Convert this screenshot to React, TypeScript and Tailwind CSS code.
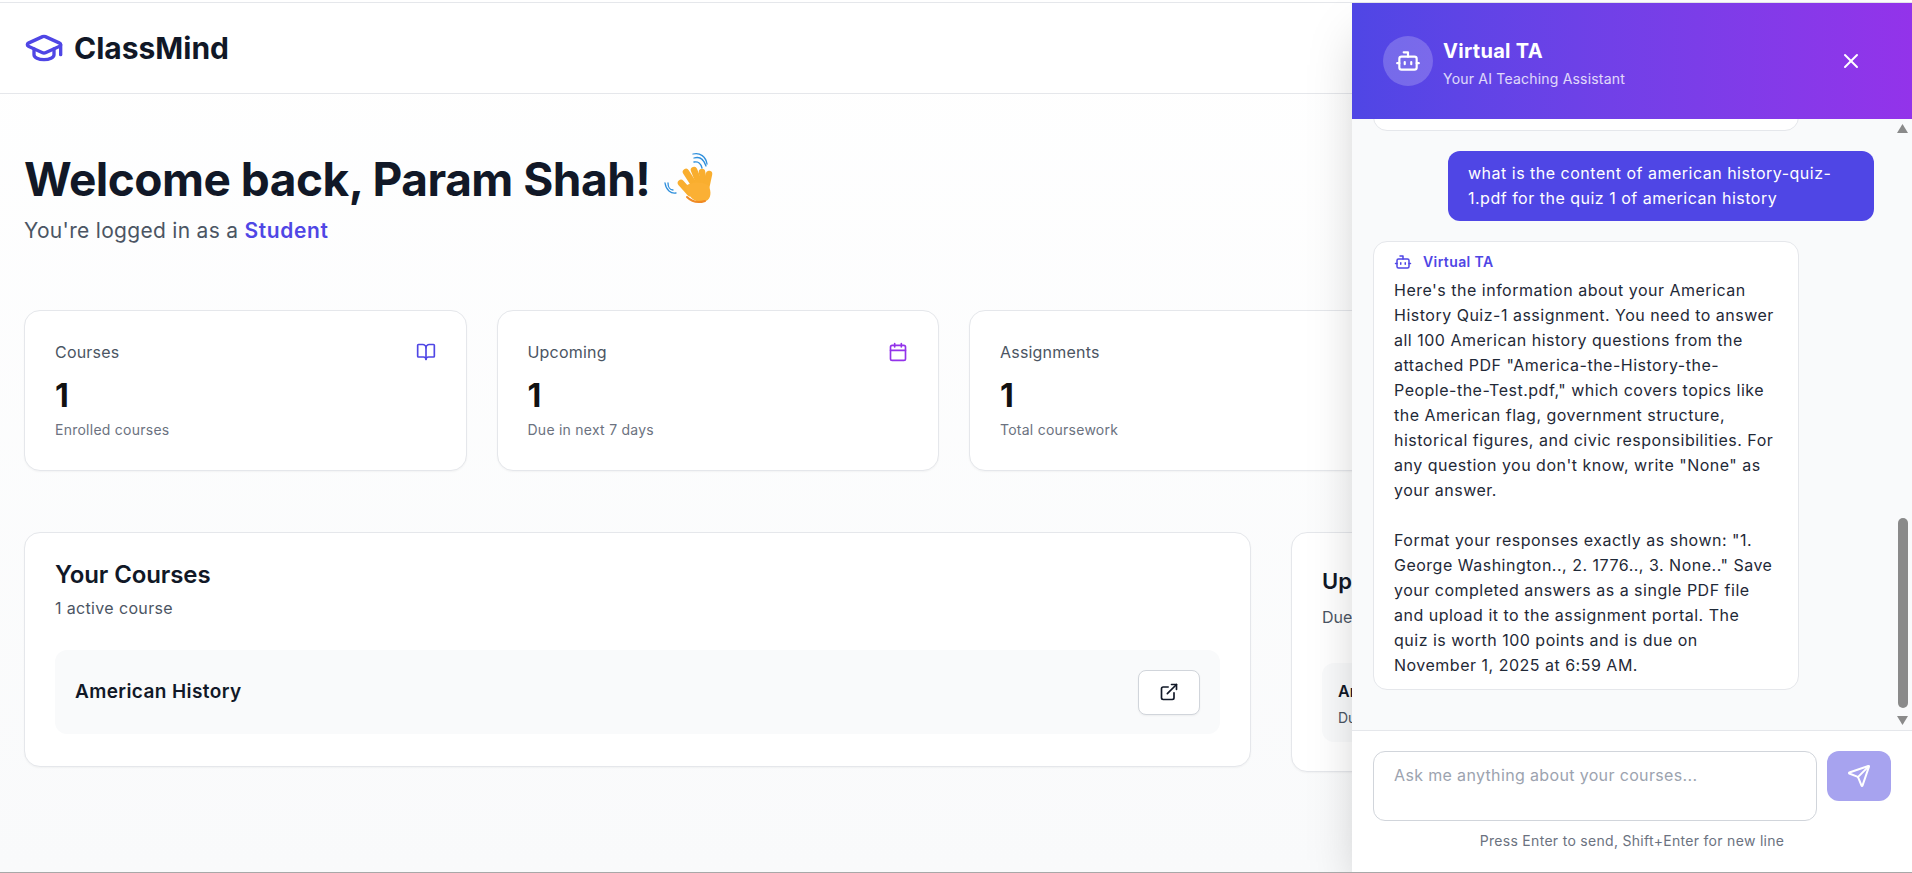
import React from "react";
import {
  BookOpen,
  Bot,
  Calendar,
  ExternalLink,
  GraduationCap,
  Send,
  X,
} from "lucide-react";

const stats = [
  { label: "Courses", value: "1", hint: "Enrolled courses", icon: <BookOpen className="h-5 w-5 text-[#4f46e5]" /> },
  { label: "Upcoming", value: "1", hint: "Due in next 7 days", icon: <Calendar className="h-5 w-5 text-[#9333ea]" /> },
  { label: "Assignments", value: "1", hint: "Total coursework", icon: <BookOpen className="h-5 w-5 text-[#4f46e5]" /> },
];

const WaveHand = () => (
  <svg viewBox="0 0 70 65" className="-my-[5px] ml-[7px] h-[65px] w-[70px] shrink-0">
    <g fill="none" stroke="#f9ae2f" strokeLinecap="round" strokeWidth="6.5">
      <path d="M24 36l9 10" />
      <path d="M29 25l9 14" />
      <path d="M37 23l6 15" />
      <path d="M45 25l2 13" />
      <path d="M52 27l-3 14" />
    </g>
    <path d="M28 40c4-5 16-6 23-2 4 6 3 14-2 16-6 2-13 0-16-5z" fill="#fbb034" />
    <path d="M30 50c5 5 12 6 18 4" fill="none" stroke="#f08a24" strokeWidth="2" strokeLinecap="round" />
    <path d="M37 15c4-1 7 2 8 6M37 11c6-2 10 2 12 8M36 7c7-2 13 3 14 10" fill="none" stroke="#2f8fdc" strokeWidth="1.3" strokeLinecap="round" />
    <path d="M16 43c-3 0-5-3-5-7M19 46c-5 1-10-3-11-10" fill="none" stroke="#2f8fdc" strokeWidth="1.3" strokeLinecap="round" />
  </svg>
);

const App = () => {
  return (
    <div className="relative h-[873px] overflow-hidden border-b border-[#a8a8a8] bg-gradient-to-b from-white to-[#f9fafb] pt-[2px] font-['Inter',sans-serif] text-[#111827]">
      <nav className="flex h-[92px] items-center gap-[10px] border-y border-[#e5e7eb] bg-white px-6">
        <GraduationCap className="h-[40px] w-[40px] text-[#4f46e5]" />
        <span className="text-[30px] font-bold">ClassMind</span>
      </nav>

      <main className="px-6 pt-[57px]">
        <h1 className="flex items-center text-[46px] font-bold leading-[56px] tracking-[-0.5px]">
          Welcome back, Param Shah!
          <WaveHand />
        </h1>
        <p className="mt-[9px] text-[21px] leading-[30px] tracking-[0.3px] text-[#4b5563]">
          You're logged in as a <span className="font-semibold tracking-[0.6px] text-[#4f46e5]">Student</span>
        </p>

        <div className="mt-[64px] grid grid-cols-[repeat(4,442.5px)] gap-[30px]">
          {stats.map((s) => (
            <div key={s.label} className="h-[161px] rounded-2xl border border-[#e5e7eb] bg-white px-[30px] pt-[29px] shadow-[0_1px_2px_rgba(0,0,0,0.04)]">
              <div className="flex items-center justify-between">
                <span className="text-[16px] tracking-[0.2px] text-[#4b5563]">{s.label}</span>
                {s.icon}
              </div>
              <div className="mt-[13px] text-[32px] font-bold leading-[38px] text-[#111111]">{s.value}</div>
              <div className="mt-[4px] text-[14px] tracking-[0.25px] text-[#6b7280]">{s.hint}</div>
            </div>
          ))}
        </div>

        <div className="mt-[61px] grid grid-cols-[1227px_1fr] items-start gap-10">
          <section className="h-[235px] rounded-2xl border border-[#e5e7eb] bg-white p-[30px] shadow-[0_1px_2px_rgba(0,0,0,0.04)]">
            <h2 className="-mt-[3px] text-[24px] font-semibold leading-[30px] tracking-[-0.1px]">Your Courses</h2>
            <p className="mt-[6px] text-[16px] tracking-[0.35px] text-[#4b5563]">1 active course</p>
            <div className="mt-[30px] flex h-[84px] items-center justify-between rounded-xl bg-[#f9fafb] pl-5 pr-5">
              <span className="text-[19px] font-semibold tracking-[0.4px]">American History</span>
              <button className="flex h-[45px] w-[62px] items-center justify-center rounded-lg border border-[#d1d5db] bg-white shadow-[0_1px_2px_rgba(0,0,0,0.05)]">
                <ExternalLink className="h-5 w-5" />
              </button>
            </div>
          </section>
          <section className="h-[240px] rounded-2xl border border-[#e5e7eb] bg-white p-[30px] shadow-[0_1px_2px_rgba(0,0,0,0.04)]">
            <h2 className="mt-[4px] text-[22px] font-semibold leading-[28px]">Upcoming Deadlines</h2>
            <p className="mt-[10px] text-[16px] text-[#4b5563]">Due soon</p>
            <div className="mt-[34px] h-[79px] rounded-xl bg-[#f9fafb] px-4 py-4">
              <div className="text-[16px] font-semibold">American History Quiz-1</div>
              <div className="mt-[4px] text-[14px] text-[#4b5563]">Due Nov 1, 2025</div>
            </div>
          </section>
        </div>
      </main>

      <aside className="absolute bottom-0 right-0 top-[3px] flex w-[560px] flex-col bg-white shadow-2xl">
        <header className="flex h-[116px] shrink-0 items-center bg-gradient-to-r from-[#4f46e5] to-[#9333ea] pl-[31px] pr-[49px] text-white">
          <div className="flex h-[50px] w-[50px] items-center justify-center rounded-full bg-white/20">
            <Bot className="h-[26px] w-[26px]" />
          </div>
          <div className="ml-[10px] mt-[3px] flex-1">
            <div className="text-[20px] font-bold leading-[28px] tracking-[0.3px]">Virtual TA</div>
            <div className="mt-[4px] text-[14px] leading-[20px] tracking-[0.2px] text-white/80">Your AI Teaching Assistant</div>
          </div>
          <X className="h-6 w-6" />
        </header>

        <div className="flex min-h-0 flex-1 bg-[#f9fafb]">
          <div className="flex min-w-0 flex-1 flex-col justify-end gap-[20px] overflow-hidden pb-[40px] pl-[21px] pr-[23px]">
            <div className="h-[40px] w-[426px] shrink-0 rounded-[14px] border border-[#e5e7eb] bg-white" />
            <div className="w-[426px] self-end rounded-xl bg-[#4f46e5] px-5 py-[10px] text-[16px] leading-[25px] tracking-[0.5px] text-white">
              what is the content of american history-quiz-1.pdf for the quiz 1 of american history
            </div>
            <div className="w-[426px] rounded-[14px] border border-[#e5e7eb] bg-white pb-[11px] pl-5 pr-[22px] pt-[10px]">
              <div className="mb-[6px] flex items-center gap-[11px] text-[14px] font-semibold leading-[20px] tracking-[0.4px] text-[#4f46e5]">
                <Bot className="h-[18px] w-[18px]" />
                Virtual TA
              </div>
              <div className="text-[16px] leading-[25px] tracking-[0.5px] text-[#1f2937]">
                <p>
                  Here's the information about your American History Quiz-1 assignment. You need to answer all 100 American history questions from the attached PDF "America-the-History-the-People-the-Test.pdf," which covers topics like the American flag, government structure, historical figures, and civic responsibilities. For any question you don't know, write "None" as your answer.
                </p>
                <p className="mt-[25px]">
                  Format your responses exactly as shown: "1. George Washington.., 2. 1776.., 3. None.." Save your completed answers as a single PDF file and upload it to the assignment portal. The quiz is worth 100 points and is due on November 1, 2025 at 6:59 AM.
                </p>
              </div>
            </div>
          </div>
          <div className="flex w-[15px] shrink-0 flex-col items-center pb-[5px] pr-[4px] pt-[5px]">
            <svg viewBox="0 0 10 8" className="h-[9px] w-[11px] fill-[#8a8a8a]"><path d="M5 0l5 8H0z" /></svg>
            <div className="mt-auto h-[190px] w-[10px] rounded-full bg-[#8a8a8a]" />
            <svg viewBox="0 0 10 8" className="mt-[8px] h-[9px] w-[11px] fill-[#8a8a8a]"><path d="M5 8L0 0h10z" /></svg>
          </div>
        </div>

        <footer className="h-[142px] shrink-0 border-t border-[#e5e7eb] bg-white px-[21px] pt-[20px]">
          <div className="flex items-start gap-[10px]">
            <div className="h-[70px] w-[449px] rounded-xl border border-[#d1d5db] px-5 pb-3 pt-[11px] text-[16px] leading-[24px] tracking-[0.35px] text-[#9ca3af]">
              Ask me anything about your courses...
            </div>
            <button className="flex h-[50px] w-[65px] items-center justify-center rounded-xl bg-[#a7a3ef] text-white">
              <Send className="h-6 w-6" />
            </button>
          </div>
          <p className="mt-[11px] text-center text-[14px] leading-[18px] tracking-[0.3px] text-[#6b7280]">
            Press Enter to send, Shift+Enter for new line
          </p>
        </footer>
      </aside>
    </div>
  );
};

export default App;
